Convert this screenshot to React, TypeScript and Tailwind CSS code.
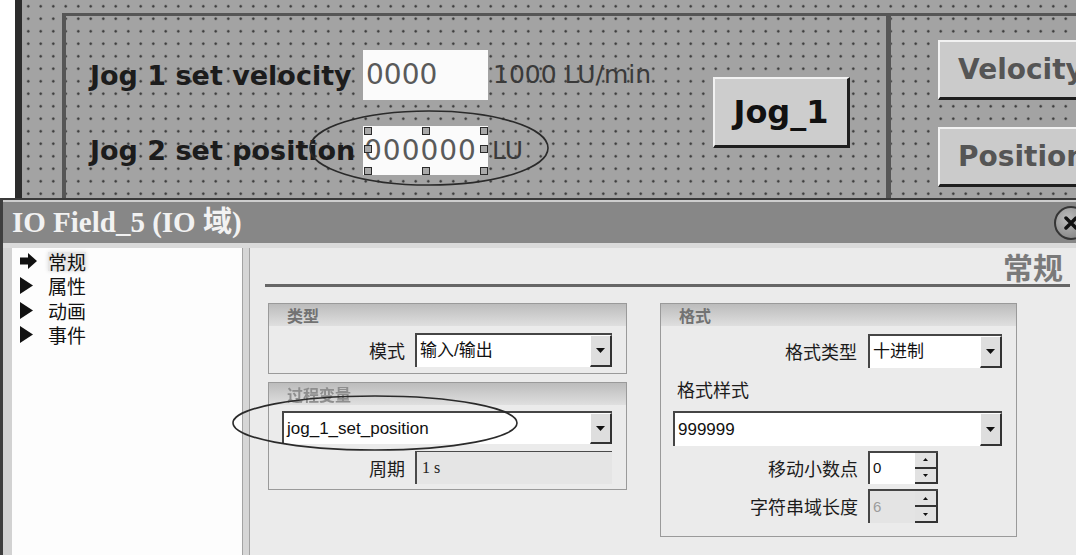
import React from 'react';

const dotted =
  "bg-[#a3a3a3] bg-[image:radial-gradient(circle,#353535_0.9px,transparent_1.5px)] bg-[length:12.5px_12.5px]";

function DownTri() {
  return (
    <svg width="9" height="5" viewBox="0 0 9 5">
      <path d="M0 0h9L4.5 5z" fill="#111" />
    </svg>
  );
}

function Select({ text, className }: { text: string; className: string }) {
  return (
    <div className={`flex bg-white border-t-2 border-l-2 border-[#454545] ${className}`}>
      <div className="flex-1 flex items-center pl-[3px] text-[17px] text-[#111] whitespace-nowrap font-['Liberation_Sans','Noto_Sans_CJK_SC',sans-serif]">
        {text}
      </div>
      <div className="w-[22px] shrink-0 bg-[#dedede] border-t border-l border-t-white border-l-white border-r-2 border-b-2 border-r-[#333] border-b-[#333] flex items-center justify-center">
        <DownTri />
      </div>
    </div>
  );
}

function Spin({ value, disabled = false }: { value: string; disabled?: boolean }) {
  return (
    <div className={`ml-[10px] w-[70px] h-full flex border-t-2 border-l-2 border-[#454545] ${disabled ? 'bg-[#e4e4e4]' : 'bg-white'}`}>
      <div className={`flex-1 flex items-center pl-[3px] text-[15px] font-['Liberation_Sans',sans-serif] ${disabled ? 'text-[#9c9c9c]' : 'text-[#111]'}`}>
        {value}
      </div>
      <div className="w-[23px] flex flex-col border-r-2 border-[#333]">
        <div className="flex-1 bg-[#e2e2e2] border-b-2 border-[#333] flex items-center justify-center">
          <svg width="5" height="3" viewBox="0 0 5 3"><path d="M0 3h5L2.5 0z" fill="#111" /></svg>
        </div>
        <div className="flex-1 bg-[#e2e2e2] border-b-2 border-[#333] flex items-center justify-center">
          <svg width="5" height="3" viewBox="0 0 5 3"><path d="M0 0h5L2.5 3z" fill="#111" /></svg>
        </div>
      </div>
    </div>
  );
}

function GroupHeader({ title, faded = false }: { title: string; faded?: boolean }) {
  return (
    <div className="h-[22px] bg-[linear-gradient(to_bottom,#bcbcbc,#dfdfdf)] flex items-center pl-[18px]">
      <span className={`text-[16px] font-bold leading-none font-['Noto_Sans_CJK_SC',sans-serif] ${faded ? 'text-[#8e8e8e] blur-[0.6px]' : 'text-[#727272]'}`}>
        {title}
      </span>
    </div>
  );
}

const label = "text-[18px] leading-none text-[#1c1c1c] font-['Noto_Sans_CJK_SC',sans-serif]";

function TreeItem({ text, selected = false }: { text: string; selected?: boolean }) {
  return (
    <div className="h-[24.5px] flex items-center">
      <div className="w-[17px] ml-[8px] flex items-center">
        {selected ? (
          <svg width="17" height="16" viewBox="0 0 17 16">
            <path d="M0 4.5h8V0l9 8-9 8v-4.5H0z" fill="#111" />
          </svg>
        ) : (
          <svg width="13" height="17" viewBox="0 0 13 17">
            <path d="M0 0l13 8.5L0 17z" fill="#111" />
          </svg>
        )}
      </div>
      <span
        className={`ml-[11px] text-[19px] leading-none text-[#111] font-['Noto_Sans_CJK_SC',sans-serif] ${selected ? 'bg-[#e6e6e6] shadow-[0_0_4px_#dcdcdc]' : ''}`}
      >
        {text}
      </span>
    </div>
  );
}

export default function App() {
  const handles = [
    'left-[1px] top-[1px]',
    'left-[59px] top-[1px]',
    'left-[117px] top-[1px]',
    'left-[1px] top-[19px]',
    'left-[117px] top-[19px]',
    'left-[1px] top-[41px]',
    'left-[59px] top-[41px]',
    'left-[117px] top-[41px]',
  ];

  return (
    <div className="relative w-[1076px] h-[555px] overflow-hidden bg-white flex flex-col">
      {/* screen editor */}
      <div className="h-[198px] flex shrink-0">
        <div className="w-[15px] shrink-0 bg-white" />
        <div className="w-[7px] shrink-0 bg-[#2c2c2c]" />
        <div className={`flex-1 min-w-0 flex flex-col pt-[13px] pl-[40px] ${dotted}`}>
          <div className="flex-1 flex border-t-[3px] border-l-[4px] border-[#565656]">
            <div className="w-[820px] shrink-0 flex items-start">
              <div className="pl-[24px] pt-[34px] flex flex-col">
                <div className="h-[50px] flex items-center">
                  <div className="w-[273px] text-[27px] font-bold leading-none text-[#1c1c1c] font-['DejaVu_Sans',sans-serif] whitespace-nowrap">
                    Jog 1 set velocity
                  </div>
                  <div className="w-[125px] h-full bg-[#fbfbfb] flex items-center pl-[3px] text-[28px] text-[#5a5a5a] font-['DejaVu_Sans',sans-serif]">
                    0000
                  </div>
                  <div className="ml-[5px] text-[25px] text-[#3a3a3a] font-['DejaVu_Sans',sans-serif] whitespace-nowrap">
                    1000 LU/min
                  </div>
                </div>
                <div className="mt-[26px] h-[49px] flex items-center">
                  <div className="w-[273px] text-[27px] font-bold leading-none text-[#1c1c1c] font-['DejaVu_Sans',sans-serif] whitespace-nowrap">
                    Jog 2 set position
                  </div>
                  <div className="relative w-[125px] h-full bg-[#fbfbfb] flex items-center pl-[1px] text-[28px] tracking-[1px] text-[#5a5a5a] font-['DejaVu_Sans',sans-serif]">
                    000000
                    {handles.map((h) => (
                      <span key={h} className={`absolute w-[8px] h-[8px] border border-[#2a2a2a] bg-[#a9a9a9] ${h}`} />
                    ))}
                  </div>
                  <div className="ml-[4px] text-[25px] text-[#3a3a3a] font-['DejaVu_Sans',sans-serif]">LU</div>
                </div>
              </div>
              <div className="ml-auto mr-[36px] mt-[61px] w-[137px] h-[71px] bg-[#cdcdcd] border-t-2 border-l-2 border-t-[#f2f2f2] border-l-[#f2f2f2] border-r-[3px] border-b-[3px] border-r-[#1e1e1e] border-b-[#1e1e1e] flex items-center justify-center text-[32px] font-bold text-[#111] font-['DejaVu_Sans',sans-serif]">
                Jog_1
              </div>
            </div>
            <div className="w-[5px] shrink-0 bg-[#565656]" />
            <div className="flex-1 min-w-0 overflow-hidden pl-[47px] pt-[24px] flex flex-col gap-[27px]">
              <div className="w-[200px] h-[60px] shrink-0 bg-[#cbcbcb] border-t-2 border-l-2 border-t-[#f2f2f2] border-l-[#f2f2f2] border-b-[3px] border-b-[#1e1e1e] flex items-center pl-[18px] text-[28px] font-bold text-[#555] whitespace-nowrap font-['DejaVu_Sans',sans-serif]">
                Velocity
              </div>
              <div className="w-[200px] h-[60px] shrink-0 bg-[#cbcbcb] border-t-2 border-l-2 border-t-[#f2f2f2] border-l-[#f2f2f2] border-b-[3px] border-b-[#1e1e1e] flex items-center pl-[18px] text-[28px] font-bold text-[#555] whitespace-nowrap font-['DejaVu_Sans',sans-serif]">
                Position
              </div>
            </div>
          </div>
        </div>
      </div>

      {/* properties dialog */}
      <div className="flex-1 flex flex-col border-t-2 border-[#3a3a3a] border-l-[3px] border-l-[#3e3e3e]">
        <div className="h-[43px] shrink-0 bg-[#878787] border-t-2 border-[#cdcdcd] flex items-center justify-between">
          <span className="pl-[9px] text-[29px] font-bold leading-none text-[#f2f2f2] whitespace-nowrap font-['Liberation_Serif','Noto_Sans_CJK_SC',serif]">
            IO Field_5 (IO 域)
          </span>
          <div className="mr-[-12px] w-[34px] h-[34px] shrink-0 rounded-full border-2 border-[#353535] bg-[radial-gradient(circle_at_40%_35%,#bdbdbd,#7a7a7a)] flex items-center justify-center">
            <svg width="14" height="14" viewBox="0 0 14 14">
              <path d="M2 2l10 10M12 2L2 12" stroke="#111" strokeWidth="3.5" strokeLinecap="round" />
            </svg>
          </div>
        </div>
        <div className="h-[5px] shrink-0 bg-[#dadada]" />
        <div className="flex-1 flex">
          <div className="w-[9px] shrink-0 bg-[#d2d2d2]" />
          <div className="w-[230px] shrink-0 bg-[#fdfdfd] pt-[1px] flex flex-col">
            <TreeItem text="常规" selected />
            <TreeItem text="属性" />
            <TreeItem text="动画" />
            <TreeItem text="事件" />
          </div>
          <div className="w-[8px] shrink-0 bg-[#d6d6d6] border-l border-r border-[#a3a3a3]" />
          <div className="flex-1 min-w-0 bg-[#ebebeb] flex flex-col">
            <div className="h-[36px] flex items-center justify-end pr-[13px]">
              <span className="text-[30px] font-bold leading-none text-[#7a7a7a] font-['Noto_Sans_CJK_SC',serif]">常规</span>
            </div>
            <div className="ml-[15px] mr-[6px] h-[3px] bg-[#666]" />
            <div className="mt-[16px] ml-[18px] flex items-start gap-[33px]">
              {/* left column */}
              <div className="w-[359px] shrink-0 flex flex-col gap-[8px]">
                <div className="border border-[#9a9a9a]">
                  <GroupHeader title="类型" />
                  <div className="h-[47px] pt-[7px] flex">
                    <div className={`w-[136px] h-[34px] flex items-center justify-end ${label}`}>模式</div>
                    <Select text="输入/输出" className="ml-[10px] w-[197px] h-[34px]" />
                  </div>
                </div>
                <div className="border border-[#9a9a9a]">
                  <GroupHeader title="过程变量" faded />
                  <div className="h-[84px] pt-[6px] flex flex-col">
                    <Select text="jog_1_set_position" className="ml-[13px] w-[330px] h-[33px]" />
                    <div className="mt-[7px] h-[33px] flex">
                      <div className={`w-[136px] flex items-center justify-end ${label}`}>周期</div>
                      <div className="ml-[10px] w-[197px] h-full bg-[#e5e5e5] border-t border-l-2 border-[#4a4a4a] flex items-center pl-[5px] text-[16px] text-[#222] font-['Liberation_Serif',serif]">
                        1 s
                      </div>
                    </div>
                  </div>
                </div>
              </div>

              {/* right column */}
              <div className="w-[357px] shrink-0 border border-[#9a9a9a]">
                <GroupHeader title="格式" />
                <div className="h-[210px] pt-[8px] flex flex-col">
                  <div className="h-[34px] flex">
                    <div className={`w-[196px] flex items-center justify-end ${label}`}>格式类型</div>
                    <Select text="十进制" className="ml-[11px] w-[134px] h-full" />
                  </div>
                  <div className={`mt-[11px] h-[20px] pl-[16px] flex items-center ${label}`}>格式样式</div>
                  <Select text="999999" className="mt-[12px] ml-[12px] w-[329px] h-[35px]" />
                  <div className="mt-[5px] h-[33px] flex">
                    <div className={`w-[197px] flex items-center justify-end ${label}`}>移动小数点</div>
                    <Spin value="0" />
                  </div>
                  <div className="mt-[5px] h-[34px] flex">
                    <div className={`w-[197px] flex items-center justify-end ${label}`}>字符串域长度</div>
                    <Spin value="6" disabled />
                  </div>
                </div>
              </div>
            </div>
          </div>
        </div>
      </div>

      {/* hand-drawn highlight ellipses */}
      <svg className="absolute inset-0 pointer-events-none" width="1076" height="555">
        <ellipse cx="429" cy="148" rx="119" ry="37" fill="none" stroke="#2a2a2a" strokeWidth="1.6" />
        <ellipse cx="375" cy="423" rx="142" ry="27" fill="none" stroke="#2a2a2a" strokeWidth="1.6" />
      </svg>
    </div>
  );
}
